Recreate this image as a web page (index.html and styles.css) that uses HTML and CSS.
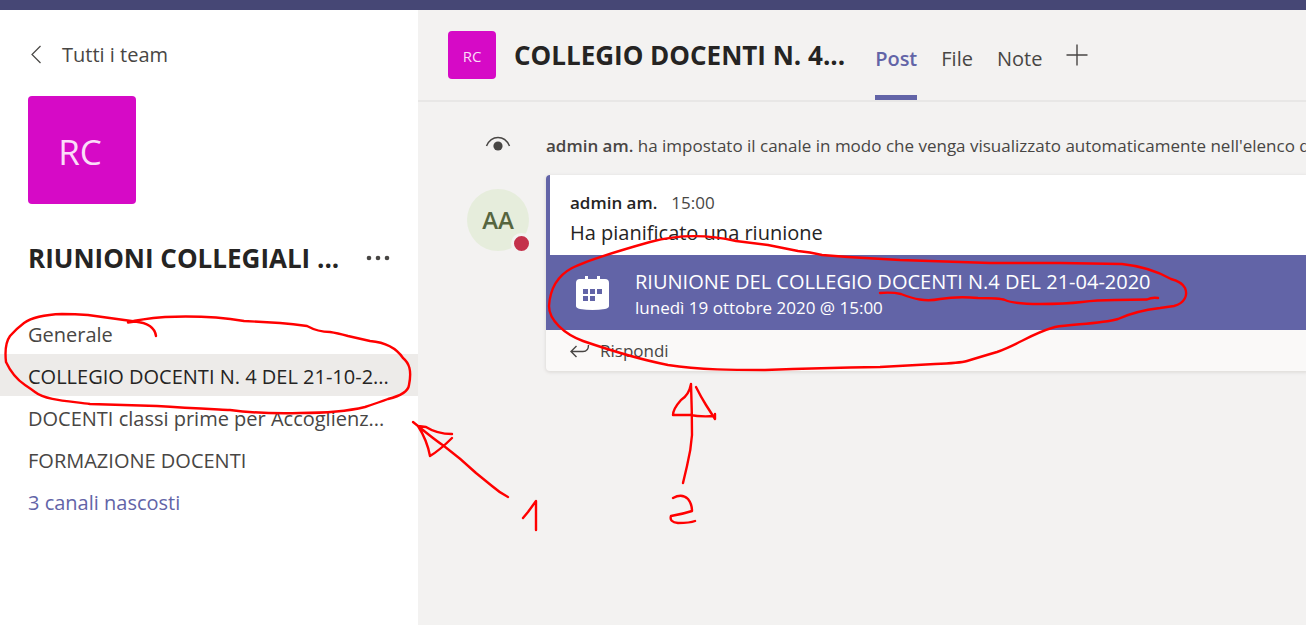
FILE: index.html
```html
<!DOCTYPE html>
<html lang="it">
<head>
<meta charset="utf-8">
<title>Riunioni collegiali</title>
<link rel="stylesheet" href="styles.css">
</head>
<body>
<div class="app">
  <div class="topbar"></div>
  <aside class="sidebar">
    <a class="back" href="#">
      <svg class="back-icon" viewBox="0 0 12 20" aria-hidden="true"><path d="M10.500 1 2 9.500l8.500 8.500"/></svg>
      <span>Tutti i team</span>
    </a>
    <div class="tile tile-large">RC</div>
    <div class="team-row">
      <h1 class="team-name">RIUNIONI COLLEGIALI ...</h1>
      <button class="more" type="button" aria-label="Altre opzioni">
        <svg class="more-icon" viewBox="0 0 24 6" aria-hidden="true"><circle cx="3" cy="3" r="2.300"/><circle cx="12" cy="3" r="2.300"/><circle cx="21" cy="3" r="2.300"/></svg>
      </button>
    </div>
    <nav class="channels">
      <a class="channel" href="#">Generale</a>
      <a class="channel active" href="#">COLLEGIO DOCENTI N. 4 DEL 21-10-2...</a>
      <a class="channel" href="#">DOCENTI classi prime per Accoglienz...</a>
      <a class="channel" href="#">FORMAZIONE DOCENTI</a>
      <a class="channel hidden-channels" href="#">3 canali nascosti</a>
    </nav>
  </aside>
  <main class="main">
    <header class="header">
      <div class="tile tile-small">RC</div>
      <h2 class="channel-title">COLLEGIO DOCENTI N. 4...</h2>
      <nav class="tabs">
        <a class="tab selected" href="#">Post</a>
        <a class="tab" href="#">File</a>
        <a class="tab" href="#">Note</a>
        <button class="add" type="button" aria-label="Aggiungi scheda">
          <svg class="add-icon" viewBox="0 0 22 22" aria-hidden="true"><path d="M11 .5v21M.5 11h21"/></svg>
        </button>
      </nav>
    </header>
    <div class="feed">
      <div class="gutter">
        <svg class="eye-icon" viewBox="0 0 26 16" aria-hidden="true"><path d="M1.500 10C4 4.500 8 1.600 13 1.600S22 4.500 24.500 10"/><circle cx="13" cy="10" r="4.600"/></svg>
      </div>
      <p class="notice"><strong>admin am.</strong> ha impostato il canale in modo che venga visualizzato automaticamente nell'elenco dei canali.</p>
      <div class="gutter">
        <div class="avatar">AA<span class="status"></span></div>
      </div>
      <article class="card">
        <div class="message">
          <div class="meta"><strong class="author">admin am.</strong><time class="time">15:00</time></div>
          <p class="text">Ha pianificato una riunione</p>
        </div>
        <a class="meeting" href="#">
          <svg class="calendar-icon" viewBox="0 0 34 34" aria-hidden="true">
            <path class="sheet" d="M10 0h3v3h9V0h3v3h5q4 0 4 4v23q0 2-4 3Q17.500 35 5 33 1 32 1 30V7q0-4 4-4h5z"/>
            <path class="days" d="M8 13h5v5H8zM15 13h5v5h-5zM22 13h5v5h-5zM8 20h5v5H8zM15 20h5v5h-5z"/>
          </svg>
          <span class="meeting-info">
            <span class="meeting-title">RIUNIONE DEL COLLEGIO DOCENTI N.4 DEL 21-04-2020</span>
            <span class="meeting-date">lunedì 19 ottobre 2020 @ 15:00</span>
          </span>
        </a>
        <button class="reply" type="button">
          <svg class="reply-icon" viewBox="0 0 20 14" aria-hidden="true"><path d="M6.500 2 1 7.500 6.500 13M1 7.500h12q5.500 0 5.500-6.500"/></svg>
          <span>Rispondi</span>
        </button>
      </article>
    </div>
  </main>
  <svg class="ink" width="1306" height="625" viewBox="0 0 1306 625" aria-hidden="true">
    <path d="M156 336C155 328 149 323 135 321.500L88 315Q75 314 62 314Q35 315 24 323Q16 329 10 336C5 343 5 353 6 362Q13 377 25 385Q31 389 35 392C45 400 68 401 90 404L157 406C187 408 210 409 230 410Q260 414 300 413Q340 413 365 407Q380 402 388 399Q408 394 409 385C412 370 409 363 403 358Q393 343 370 341L348 336Q337 333 330 332Q318 332 307 326Q293 324 280 323Q262 322 244 321C220 317 188 316 165 317Q140 319 128 322.500L135 321.500"/>
    <path d="M736 241C710 235 680 234 650 242C618 251 590 259 572 268C557 276 550 290 549 306C549 320 564 334 583 341C615 352 648 361 668 365C700 370 735 370 765 370Q820 368 880 367L935 364Q960 363 967 361Q980 357 997 352C1020 344 1030 334 1055 327C1072 324 1100 324 1118 319Q1135 311 1160 308L1174 306C1185 303 1188 295 1185 288Q1182 282 1171 279Q1150 267 1122 264L1060 263L990 263L900 260L848 257L822 255Q810 252 798 251Q783 248 768 245Z"/>
    <path d="M880 293Q892 292 901 294C914 299 925 302 940 299Q958 296 978 298Q1000 298 1005 300Q1014 304 1040 304Q1065 304 1082 302Q1097 300 1115 300L1147 299.500Q1152 297 1158 298"/>
    <path d="M413 422 418 426Q435 440 444 446Q460 458 476 473L492 486Q500 493 508 497M452 434Q437 434 426 427L418 426Q427 440 430 456Q440 450 452 438"/>
    <path d="M523 518 528 512 536 501V530"/>
    <path d="M691 384Q692 410 692 435Q691 450 687 466L683 483M691 384Q689 395 681 400 673 409 673 415H690Q700 417 715 416M696 387Q701 397 706 405L715 419V414"/>
    <path d="M673 498Q682 493 688 499 692 504 692 511Q683 514 671 516 669 522 678 523 690 523 695 521"/>
  </svg>
</div>
</body>
</html>
```
FILE: styles.css
```css
* { box-sizing: border-box; }

body {
  margin: 0;
  font-family: "Open Sans", "Noto Sans", sans-serif;
  font-size: 20px;
  line-height: 28px;
  color: #484644;
  background: #f3f2f1;
}

h1, h2, p { margin: 0; }

a { color: inherit; text-decoration: none; }

button {
  padding: 0;
  border: 0;
  background: none;
  font: inherit;
  color: inherit;
}

svg { display: block; flex: none; fill: none; stroke: #484644; }

.app {
  position: relative;
  display: grid;
  grid-template-columns: 418px minmax(0, 1fr);
  grid-template-rows: 10px 1fr;
  min-height: 100vh;
  overflow: hidden;
}

.topbar { grid-column: 1 / -1; background: #464775; }

.sidebar { background: #fff; padding-top: 31px; }

.back { display: flex; align-items: center; gap: 20px; padding-left: 30px; }
.back-icon { width: 12px; height: 20px; stroke-width: 1.2; }

.tile {
  display: flex;
  align-items: center;
  justify-content: center;
  flex: none;
  border-radius: 4px;
  background: #d60ac6;
  color: #fbdcf8;
}
.tile-large { width: 108px; height: 108px; margin: 27px 0 0 28px; padding: 4px 4px 0 0; font-size: 35px; }
.tile-small { width: 48px; height: 48px; padding-top: 2px; font-size: 15px; }

.team-row {
  display: flex;
  align-items: center;
  justify-content: space-between;
  padding: 36px 28px 0 28px;
}
.team-name { font-size: 26px; line-height: 36px; font-weight: 700; color: #252423; white-space: nowrap; }
.more-icon { width: 24px; height: 6px; fill: #484644; stroke: none; }

.channels { display: flex; flex-direction: column; margin-top: 36px; }
.channel { padding: 4px 20px 0 28px; line-height: 38px; white-space: nowrap; overflow: hidden; }
.channel.active { background: #edebe9; color: #252423; }
.channel.hidden-channels { color: #6264a7; }

.main { min-width: 0; }

.header {
  display: flex;
  align-items: center;
  height: 92px;
  padding-left: 30px;
  border-bottom: 2px solid #e8e7e6;
}
.channel-title {
  margin-left: 18px;
  font-size: 26px;
  line-height: 36px;
  font-weight: 700;
  color: #252423;
  white-space: nowrap;
}
.tabs { display: flex; align-self: stretch; gap: 24px; margin-left: 30px; }
.tab { padding-top: 35px; border-bottom: 5px solid transparent; }
.tab.selected { color: #6264a7; border-color: #6264a7; font-weight: 600; }
.add-icon { width: 22px; height: 22px; stroke-width: 1.4; }

.feed {
  display: grid;
  grid-template-columns: 104px minmax(0, 1fr);
  column-gap: 24px;
  padding-top: 30px;
}
.gutter { display: flex; justify-content: flex-end; }
.eye-icon { width: 26px; height: 16px; margin: 4px 11px 0 0; stroke-width: 1.5; }
.eye-icon circle { fill: #484644; stroke: none; }
.notice { font-size: 17px; white-space: nowrap; overflow: hidden; }
.notice strong, .author { font-weight: 600; }

.avatar {
  position: relative;
  display: flex;
  align-items: center;
  justify-content: center;
  width: 62px;
  height: 62px;
  margin: 29px -7px 0 0;
  border-radius: 50%;
  background: #e6eddc;
  color: #56653f;
  font-size: 24px;
  font-weight: 600;
}
.status {
  position: absolute;
  right: -3px;
  bottom: -3px;
  width: 21px;
  height: 21px;
  border: 3px solid #f3f2f1;
  border-radius: 50%;
  background: #c4314b;
}

.card {
  margin-top: 15px;
  border-radius: 4px 0 0 4px;
  background: #faf9f8;
  box-shadow: 0 1px 3px 1px #e1dfdd;
  overflow: hidden;
}
.message {
  padding: 14px 0 6px 20px;
  border-left: 4px solid #6264a7;
  background: #fff;
  color: #252423;
}
.meta { display: flex; gap: 14px; font-size: 17px; }
.time { color: #484644; }
.text { line-height: 32px; }

.meeting {
  display: flex;
  align-items: center;
  gap: 26px;
  height: 75px;
  padding-left: 29px;
  background: #6264a7;
  color: #fff;
}
.calendar-icon { width: 34px; height: 34px; stroke: none; }
.sheet { fill: #fff; }
.days { fill: #6264a7; }
.meeting-info { display: flex; flex-direction: column; padding-top: 4px; white-space: nowrap; }
.meeting-title { line-height: 26px; }
.meeting-date { font-size: 17px; line-height: 26px; }

.reply { display: flex; align-items: center; gap: 10px; height: 41px; padding-left: 24px; font-size: 17px; }
.reply-icon { width: 20px; height: 14px; stroke-width: 1.4; }

.ink {
  position: absolute;
  top: 0;
  left: 0;
  pointer-events: none;
  stroke: #f00;
  stroke-width: 2.4;
  stroke-linecap: round;
  stroke-linejoin: round;
}
```
